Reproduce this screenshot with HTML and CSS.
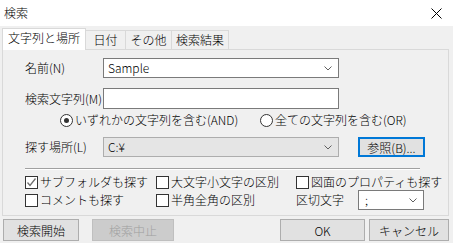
FILE: index.html
```html
<!DOCTYPE html>
<html lang="ja">
<head>
    <meta charset="UTF-8">
    <title>検索</title>
    <link rel="stylesheet" href="styles.css">
</head>
<body>
    <div class="window">
        <div class="titlebar">
            <span class="title">検索</span>
            <svg class="close" width="11" height="11" viewBox="0 0 11 11"><path d="M0.5 0.5 L10.5 10.5 M10.5 0.5 L0.5 10.5" stroke="#000" stroke-width="1"/></svg>
        </div>
        <div class="main">
            <div class="tabs">
                <div class="tab active" style="width: 84px">文字列と場所</div>
                <div class="tab" style="width: 41px">日付</div>
                <div class="tab" style="width: 47px">その他</div>
                <div class="tab" style="width: 58px">検索結果</div>
            </div>
            <div class="panel">
                <div class="row">
                    <span class="label">名前(N)</span>
                    <div class="combo">
                        <span class="value">Sample</span>
                        <svg class="chevron" width="8" height="5" viewBox="0 0 8 5"><polyline points="0.5,0.5 4,4 7.5,0.5" fill="none" stroke="#606060"/></svg>
                    </div>
                </div>
                <div class="row row-text">
                    <span class="label">検索文字列(M)</span>
                    <div class="textbox"></div>
                </div>
                <div class="row row-radio">
                    <span class="radio-item first"><span class="radio checked"></span>いずれかの文字列を含む(AND)</span>
                    <span class="radio-item"><span class="radio"></span>全ての文字列を含む(OR)</span>
                </div>
                <div class="row row-place">
                    <span class="label">探す場所(L)</span>
                    <div class="combo list">
                        <span class="value">C:¥</span>
                        <svg class="chevron" width="8" height="5" viewBox="0 0 8 5"><polyline points="0.5,0.5 4,4 7.5,0.5" fill="none" stroke="#606060"/></svg>
                    </div>
                    <button class="btn browse">参照(B)...</button>
                </div>
                <div class="separator"></div>
                <div class="options">
                    <span class="check-item"><span class="check checked"><svg width="11" height="11" viewBox="0 0 11 11"><polyline points="1.5,5.5 4,8.5 9.5,1.5" fill="none" stroke="#6d6d6d" stroke-width="1.3"/></svg></span>サブフォルダも探す</span>
                    <span class="check-item"><span class="check"></span>大文字小文字の区別</span>
                    <span class="check-item"><span class="check"></span>図面のプロパティも探す</span>
                    <span class="check-item"><span class="check"></span>コメントも探す</span>
                    <span class="check-item"><span class="check"></span>半角全角の区別</span>
                    <span class="check-item">
                        <span class="delim-label">区切文字</span>
                        <div class="combo small">
                            <span class="value">;</span>
                            <svg class="chevron" width="8" height="5" viewBox="0 0 8 5"><polyline points="0.5,0.5 4,4 7.5,0.5" fill="none" stroke="#606060"/></svg>
                        </div>
                    </span>
                </div>
            </div>
            <div class="buttons">
                <button class="btn" style="width: 76px">検索開始</button>
                <button class="btn stop" disabled style="width: 82px">検索中止</button>
                <span class="spacer"></span>
                <button class="btn" style="width: 85px">OK</button>
                <button class="btn cancel" style="width: 80px">キャンセル</button>
            </div>
        </div>
    </div>
</body>
</html>
```
FILE: styles.css
```css
body {
    margin: 0;
    font-family: "Noto Sans CJK JP", "Noto Sans", sans-serif;
    font-size: 12px;
    font-weight: 300;
    color: #000;
    background-color: #f0f0f0;
}
.window {
    width: 453px;
    height: 243px;
    background-color: #f0f0f0;
    overflow: hidden;
}
.titlebar {
    height: 26px;
    background-color: #ffffff;
    display: flex;
    align-items: center;
    justify-content: space-between;
    padding: 0 11px 0 4px;
    box-sizing: border-box;
}
.title {
    line-height: 14px;
}
.main {
    padding: 2px 4px 0 2px;
}
.tabs {
    display: flex;
    align-items: flex-end;
    height: 21px;
    padding-left: 1px;
    position: relative;
    z-index: 1;
}
.tab {
    height: 19px;
    box-sizing: border-box;
    border: 1px solid #d9d9d9;
    border-bottom: none;
    margin-left: -1px;
    display: flex;
    align-items: center;
    justify-content: center;
    line-height: 14px;
    background-color: #f0f0f0;
}
.tab.active {
    height: 22px;
    margin-bottom: -1px;
    background-color: #ffffff;
    padding-bottom: 3px;
}
.panel {
    height: 167px;
    box-sizing: border-box;
    border: 1px solid #d9d9d9;
    padding: 8px 0 0 22px;
    background-color: #f0f0f0;
}
.row {
    display: flex;
    align-items: center;
    height: 20px;
}
.label {
    width: 78px;
    line-height: 14px;
}
.combo, .textbox {
    width: 236px;
    height: 20px;
    box-sizing: border-box;
    border: 1px solid #7a7a7a;
    background-color: #ffffff;
    display: flex;
    align-items: center;
    justify-content: space-between;
    padding: 0 6px 0 4px;
}
.value {
    font-size: 12px;
    line-height: 14px;
}
.combo.list {
    background-color: #e5e5e5;
    border-color: #adadad;
}
.combo.small {
    width: 66px;
    padding-left: 6px;
}
.row-text {
    margin-top: 10px;
    height: 21px;
}
.textbox {
    height: 21px;
}
.row-radio {
    margin-top: 3px;
    height: 16px;
}
.radio-item {
    display: flex;
    align-items: center;
    line-height: 14px;
}
.radio-item.first {
    margin-left: 35px;
    width: 200px;
}
.radio {
    width: 11px;
    height: 11px;
    border: 1px solid #333;
    border-radius: 50%;
    background-color: #fff;
    margin-right: 2px;
    position: relative;
}
.radio.checked::after {
    content: "";
    position: absolute;
    left: 3px;
    top: 3px;
    width: 5px;
    height: 5px;
    border-radius: 50%;
    background-color: #333;
}
.row-place {
    margin-top: 9px;
}
.btn {
    font-family: inherit;
    font-size: 12px;
    font-weight: 300;
    height: 22px;
    box-sizing: border-box;
    border: 1px solid #adadad;
    background-color: #e1e1e1;
    color: #000;
    padding: 0;
}
.btn:disabled {
    background-color: #cccccc;
    border-color: #bfbfbf;
    color: #a0a0a0;
}
.browse {
    margin-left: 19px;
    width: 67px;
    height: 20px;
    border: 2px solid #0078d7;
}
.separator {
    margin-top: 11px;
    width: 395px;
    border-top: 1px solid #a0a0a0;
    border-bottom: 1px solid #ffffff;
}
.options {
    display: grid;
    grid-template-columns: 131px 140px 1fr;
    grid-template-rows: 16px 20px;
    margin-top: 4px;
}
.check-item {
    display: flex;
    align-items: center;
    line-height: 14px;
}
.check {
    width: 13px;
    height: 13px;
    box-sizing: border-box;
    border: 1px solid #333;
    background-color: #fff;
    margin-right: 2px;
    display: flex;
    align-items: center;
    justify-content: center;
}
.delim-label {
    width: 62px;
}
.buttons {
    display: flex;
    margin-top: 3px;
    padding-left: 1px;
}
.stop {
    margin-left: 13px;
}
.cancel {
    margin-left: 4px;
}
.spacer {
    flex: 1;
}
```
